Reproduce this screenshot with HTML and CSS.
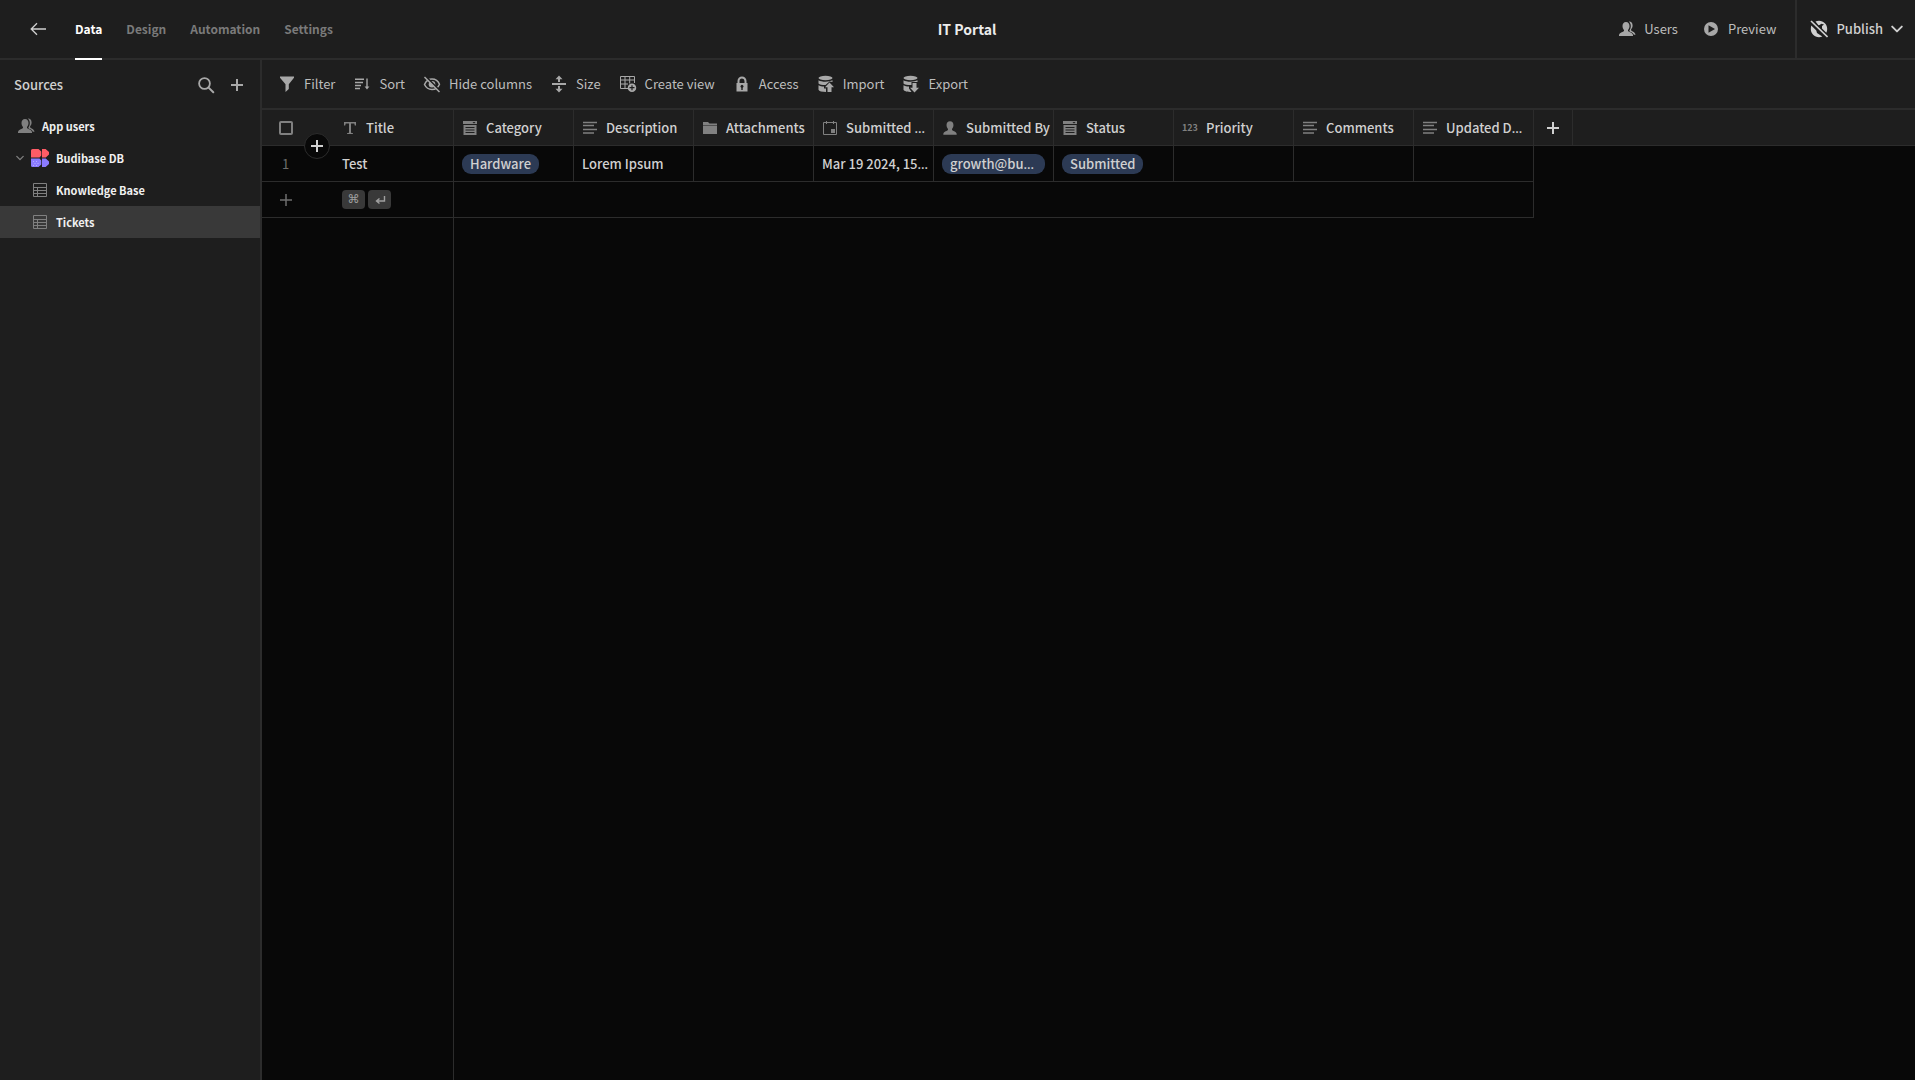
FILE: index.html
```html
<!DOCTYPE html>
<html lang="en">
<head>
<meta charset="utf-8">
<meta name="viewport" content="width=device-width, initial-scale=1">
<title>IT Portal</title>
<link rel="stylesheet" href="styles.css">
</head>
<body>
<svg class="sprite" aria-hidden="true">
  <symbol id="back" viewBox="0 0 18 18"><path d="M17 9H2.500M8 3.200L2.200 9 8 14.800" fill="none" stroke="currentColor" stroke-width="1.300"/></symbol>
  <symbol id="users" viewBox="0 0 18 18"><path d="M8 2C5.700 2 4.500 3.800 4.500 5.900c0 1.800.700 3 1.500 4v1.200c-.2.800-4.300 1.300-5 3.900V16h14v-1c-.7-2.600-4.800-3.100-5-3.900V9.900c.8-1 1.500-2.200 1.500-4C11.500 3.800 10.300 2 8 2z"/><path d="M10.700 1.600c2.400-.2 3.900 1.600 3.900 3.800 0 1.700-.7 2.900-1.500 3.800v1.100c.2.900 3.700 1.500 4.300 4v.5h-1.500c-.9-2.400-4.100-2.900-4.500-3.500v-.8c.8-1.200 1.400-2.400 1.400-4.400 0-2-.8-3.500-2.100-4.500z"/></symbol>
  <symbol id="user" viewBox="0 0 18 18"><path d="M9 1.500c-2.500 0-3.900 1.800-3.900 4.200 0 1.900.7 3.300 1.600 4.300v1.300C6.500 12.200 2 12.700 1.500 15.500v1h15v-1C16 12.700 11.500 12.200 11.300 11.300V10c.9-1 1.600-2.400 1.600-4.300 0-2.400-1.400-4.200-3.900-4.200z"/></symbol>
  <symbol id="play" viewBox="0 0 18 18"><path fill-rule="evenodd" d="M9 2a7 7 0 100 14A7 7 0 009 2zM6.500 5.200v7.600L13 9z"/></symbol>
  <symbol id="globe-off" viewBox="0 0 18 18"><path d="M5.500 1.500C6.500 1 7.700.8 9 .8c4.600 0 8.200 3.600 8.200 8.200 0 1.400-.3 2.700-.9 3.800L12 8.500V6l2-1.500-2.500-.8-2 1.300-1 .2zM1.300 5.500l5 5 .7 2.500 5.300 3.600c-1 .4-2.100.6-3.300.6C4.400 17.200.8 13.600.8 9c0-1.300.2-2.500.5-3.500z"/><path d="M1 1.500l16 15.500" stroke="#1e1e1e" stroke-width="3.400"/><path d="M1 1l16.500 16" stroke="currentColor" stroke-width="1.600"/></symbol>
  <symbol id="chevron" viewBox="0 0 10 10"><path d="M1 3l4 4 4-4" fill="none" stroke="currentColor" stroke-width="1.600" stroke-linecap="round" stroke-linejoin="round"/></symbol>
  <symbol id="search" viewBox="0 0 18 18"><path d="M11.600 11.600L16.300 16.300" stroke="currentColor" stroke-width="2" stroke-linecap="round"/><circle cx="7.500" cy="7.500" r="5.400" fill="none" stroke="currentColor" stroke-width="1.800"/></symbol>
  <symbol id="plus" viewBox="0 0 12 12"><path d="M6 0v12M0 6h12" stroke="currentColor" stroke-width="2"/></symbol>
  <symbol id="plus-thin" viewBox="0 0 12 12"><path d="M6 0v12M0 6h12" stroke="currentColor" stroke-width="1.500"/></symbol>
  <symbol id="table" viewBox="0 0 14 14"><path d="M.5.500h13v13H.5zM.5 4.500h13M.5 7.500h13M.5 10.500h13M4.500 4.500v9" fill="none" stroke="currentColor"/></symbol>
  <symbol id="brand" viewBox="0 0 18 18"><path fill="#ff5c66" d="M0 1.500Q0 0 1.500 0H7.500L10.300 2.500v4L8.500 8.500H0zM11 0h3.600L18 3v2.500L14.800 8.500H11z"/><path fill="#8b7bff" d="M0 9.500h8.500l1.800 2v4L7.500 18h-6Q0 18 0 16.500zM11 9.500h3.800L18 12.500V15l-3.400 3H11z"/><path fill="#b6adff" d="M2 12h1v1H2zM5 12h1v1H5zM3.500 14h1v1h-1zM6.500 14h1v1h-1zM2 16h1v1H2zM5 16h1v1H5z"/></symbol>
  <symbol id="filter" viewBox="0 0 18 18"><path d="M2 1.500h14v1.200l-5.200 6.500V14l-3.300 3V9.200L2 2.700z"/></symbol>
  <symbol id="sort" viewBox="0 0 18 18"><path d="M2 4.200h9M2 7.500h8M2 10.500h6M2 13.500h5" stroke="currentColor" stroke-width="1.600"/><path d="M14 3.500v9" stroke="currentColor" stroke-width="1.400"/><path d="M11.600 11.500h4.800L14 14.500z"/></symbol>
  <symbol id="hide" viewBox="0 0 18 18"><path d="M1.500 9.500C3 6.200 5.700 4 9 4s6.300 2.200 7.500 5.200c-1.300 3.200-4.100 5.300-7.500 5.300S3 12.700 1.500 9.500z" fill="none" stroke="currentColor" stroke-width="1.500"/><circle cx="9" cy="9.300" r="3.300"/><path d="M2.700 1.500L17 15.800" stroke="#1e1e1e" stroke-width="1.800"/><path d="M1.500 2L16.500 17" stroke="currentColor" stroke-width="1.500"/></symbol>
  <symbol id="size" viewBox="0 0 18 18"><path d="M2 8h14v2H2zM9 .500l3.500 3.700H10V7H8V4.200H5.500zM9 17.500l3.500-3.700H10V11H8v2.800H5.500z"/></symbol>
  <symbol id="view" viewBox="0 0 18 18"><path d="M9 13.500H1.500v-12h14V8M1.500 5h14M1.500 9H9M6 1.500v12M10.700 1.500v7" fill="none" stroke="currentColor"/><path fill-rule="evenodd" d="M13 8.500a4.200 4.200 0 100 8.500 4.200 4.200 0 000-8.500zM12.400 10.200h1.200v1.900h1.900v1.200h-1.900v1.900h-1.200v-1.900h-1.900v-1.200h1.900z"/></symbol>
  <symbol id="lock" viewBox="0 0 18 18"><path fill-rule="evenodd" d="M3.500 8h1V6a4.500 4.500 0 019 0v2h1v8.500h-11zM6.500 8h5V6a2.500 2.500 0 00-5 0zM8.300 12.800V15h1.400v-2.200a1.500 1.500 0 10-1.400 0z"/></symbol>
  <symbol id="import" viewBox="0 0 18 18"><ellipse cx="8.500" cy="3" rx="7" ry="2.200"/><path d="M1.500 5.200c3 1.900 10.500 2 14 .1V7L12.500 6.500 8.500 10C5 10 2.500 9.500 1.500 8.500zM1.500 10.200c1.200.9 3.500 1.300 5.500 1.400v2h2V17c-4-.1-7-.8-7.500-2.300zM12.500 7.500L17 12.300h-2.500V17h-4v-4.700H8z"/></symbol>
  <symbol id="export" viewBox="0 0 18 18"><ellipse cx="8.500" cy="3" rx="7" ry="2.200"/><path d="M1.500 5.200c3 1.900 10.500 2 14 .1V7H9.500v3C5 10 2.500 9.500 1.500 8.500zM1.500 10.200c1.200.9 3.500 1.300 5.500 1.400v2L9.500 17c-4-.1-7.500-.8-8-2.300zM12.500 17.500L8 12.700h2.500V8h4v4.700H17z"/></symbol>
  <symbol id="text" viewBox="0 0 16 16"><path d="M2 2h12v3.500h-1.200L12.300 3.500H9v9.300l2 .4V14H5v-.8l2-.4V3.500H3.700L3.200 5.500H2z"/></symbol>
  <symbol id="options" viewBox="0 0 16 16"><path fill-rule="evenodd" d="M1 1h14v3H1zM10.500 2h3L12 3.500zM1.500 5h13v10h-13zM3.500 7v1h9V7zM3.500 9.500v1h9v-1zM3.500 12v1h9v-1z"/></symbol>
  <symbol id="lines" viewBox="0 0 16 16"><path d="M1 2.500h14M1 5.500h11M1 9.500h14M1 13h11" stroke="currentColor" stroke-width="1.400"/></symbol>
  <symbol id="folder" viewBox="0 0 16 16"><path d="M1 2h5l1.500 1.500H15V5H1zM1 5.500h14V14H1z"/></symbol>
  <symbol id="calendar" viewBox="0 0 16 16"><path d="M1.500 2.500h13v12h-13zM4.500 1v3M11.500 1v3" fill="none" stroke="currentColor"/><path d="M9 9h4v4H9z"/></symbol>
  <symbol id="return" viewBox="0 0 12 12"><path d="M10.500 2v5H3M5.500 4.500L2.500 7l3 2.500" fill="none" stroke="currentColor" stroke-width="1.400"/></symbol>
</svg>

<header class="topbar">
  <nav class="tabs">
    <a class="back" href="#" aria-label="Back"><svg class="icon"><use href="#back"/></svg></a>
    <a class="tab tab-active" href="#">Data</a>
    <a class="tab" href="#">Design</a>
    <a class="tab" href="#">Automation</a>
    <a class="tab" href="#">Settings</a>
  </nav>
  <h1 class="app-name">IT Portal</h1>
  <div class="actions">
    <button class="tool"><svg class="icon"><use href="#users"/></svg>Users</button>
    <button class="tool"><svg class="icon"><use href="#play"/></svg>Preview</button>
    <button class="publish"><svg class="icon"><use href="#globe-off"/></svg>Publish<svg class="icon-chevron"><use href="#chevron"/></svg></button>
  </div>
</header>

<div class="workspace">
  <aside class="sidebar">
    <div class="sidebar-head">
      <h2 class="sidebar-title">Sources</h2>
      <button class="icon-button" aria-label="Search"><svg class="icon"><use href="#search"/></svg></button>
      <button class="icon-button" aria-label="Add source"><svg class="icon-plus"><use href="#plus"/></svg></button>
    </div>
    <nav class="sources">
      <a class="source" href="#"><svg class="icon"><use href="#users"/></svg>App users</a>
      <a class="source source-db" href="#"><svg class="icon-chevron"><use href="#chevron"/></svg><svg class="icon"><use href="#brand"/></svg>Budibase DB</a>
      <a class="source source-table" href="#"><svg class="icon-table"><use href="#table"/></svg>Knowledge Base</a>
      <a class="source source-table source-selected" href="#"><svg class="icon-table"><use href="#table"/></svg>Tickets</a>
    </nav>
  </aside>

  <main class="content">
    <div class="toolbar">
      <button class="tool"><svg class="icon"><use href="#filter"/></svg>Filter</button>
      <button class="tool"><svg class="icon"><use href="#sort"/></svg>Sort</button>
      <button class="tool"><svg class="icon"><use href="#hide"/></svg>Hide columns</button>
      <button class="tool"><svg class="icon"><use href="#size"/></svg>Size</button>
      <button class="tool"><svg class="icon"><use href="#view"/></svg>Create view</button>
      <button class="tool"><svg class="icon"><use href="#lock"/></svg>Access</button>
      <button class="tool"><svg class="icon"><use href="#import"/></svg>Import</button>
      <button class="tool"><svg class="icon"><use href="#export"/></svg>Export</button>
    </div>

    <div class="grid">
      <table class="rows">
        <colgroup>
          <col class="col-gutter"><col class="col-data"><col class="col-data"><col class="col-data"><col class="col-data"><col class="col-data"><col class="col-data"><col class="col-data"><col class="col-data"><col class="col-data"><col class="col-data"><col class="col-add"><col>
        </colgroup>
        <thead>
          <tr>
            <th class="gutter"><input class="check" type="checkbox" aria-label="Select all rows"></th>
            <th class="line"><div class="head"><svg class="icon-type"><use href="#text"/></svg>Title</div></th>
            <th class="line"><div class="head"><svg class="icon-type"><use href="#options"/></svg>Category</div></th>
            <th class="line"><div class="head"><svg class="icon-type"><use href="#lines"/></svg>Description</div></th>
            <th class="line"><div class="head"><svg class="icon-type"><use href="#folder"/></svg>Attachments</div></th>
            <th class="line"><div class="head"><svg class="icon-type"><use href="#calendar"/></svg><span>Submitted <span class="more">…</span></span></div></th>
            <th class="line"><div class="head"><svg class="icon-type"><use href="#user"/></svg>Submitted By</div></th>
            <th class="line"><div class="head"><svg class="icon-type"><use href="#options"/></svg>Status</div></th>
            <th class="line"><div class="head"><span class="number-type">123</span>Priority</div></th>
            <th class="line"><div class="head"><svg class="icon-type"><use href="#lines"/></svg>Comments</div></th>
            <th class="line"><div class="head"><svg class="icon-type"><use href="#lines"/></svg><span>Updated D<span class="more">…</span></span></div></th>
            <th class="line add-cell"><button class="add-column" aria-label="Add column"><svg class="icon-plus"><use href="#plus"/></svg></button></th>
            <th></th>
          </tr>
        </thead>
        <tbody>
          <tr>
            <td class="gutter row-number">1</td>
            <td class="line">Test</td>
            <td class="line"><span class="pill">Hardware</span></td>
            <td class="line">Lorem Ipsum</td>
            <td class="line"></td>
            <td class="line">Mar 19 2024, 15<span class="more">…</span></td>
            <td class="line"><span class="pill pill-full">growth@bu<span class="more">…</span></span></td>
            <td class="line"><span class="pill">Submitted</span></td>
            <td class="line"></td>
            <td class="line"></td>
            <td class="line"></td>
            <td class="empty" colspan="2"></td>
          </tr>
          <tr>
            <td class="gutter"><button class="add-row" aria-label="Add row"><svg class="icon-plus"><use href="#plus-thin"/></svg></button></td>
            <td class="line"><div class="keys"><kbd class="key">⌘</kbd><kbd class="key"><svg class="icon-plus"><use href="#return"/></svg></kbd></div></td>
            <td class="line" colspan="9"></td>
            <td class="empty" colspan="2"></td>
          </tr>
        </tbody>
      </table>
      <div class="frozen-edge"></div>
      <button class="insert" aria-label="Insert row"><svg class="icon-plus"><use href="#plus"/></svg></button>
    </div>
  </main>
</div>
</body>
</html>
```
FILE: styles.css
```css
* { box-sizing: border-box; }

:root {
  --panel: #1e1e1e;
  --canvas: #080808;
  --edge: #2c2c2c;
  --text: #d0d0d0;
  --muted: #6e6e6e;
}

body {
  margin: 0;
  min-height: 100vh;
  display: flex;
  flex-direction: column;
  background: var(--canvas);
  color: var(--text);
  font: 13px/20px "Noto Sans CJK KR", "Noto Sans", sans-serif;
}

a { color: inherit; text-decoration: none; }

button {
  display: flex;
  align-items: center;
  padding: 0;
  border: 0;
  background: none;
  color: inherit;
  font: inherit;
  white-space: nowrap;
}

svg { display: block; flex: none; fill: currentColor; }
.sprite { position: absolute; width: 0; height: 0; }
.icon { width: 18px; height: 18px; }
.icon-type { width: 16px; height: 16px; }
.icon-table { width: 14px; height: 14px; }
.icon-plus { width: 12px; height: 12px; }
.icon-chevron { width: 12px; height: 12px; }

/* Top bar */
.topbar {
  display: flex;
  justify-content: space-between;
  height: 60px;
  background: var(--panel);
  border-bottom: 2px solid var(--edge);
}
.tabs { display: flex; gap: 24px; padding-left: 29px; }
.back { display: flex; align-items: center; margin-right: 4px; }
.tab {
  display: flex;
  align-items: center;
  height: 60px;
  border-bottom: 2px solid transparent;
  color: #7a7a7a;
  font-size: 12px;
  font-weight: 700;
}
.tab-active { color: #fff; border-color: #fff; }
.app-name { margin: 0; align-self: center; color: #ececec; font-size: 14px; font-weight: 700; }
.actions { display: flex; gap: 6px; padding-left: 8px; }
.tool { gap: 8px; padding: 0 9px; color: #bdbdbd; }
.tool .icon { color: #a8a8a8; }
.publish {
  gap: 8px;
  margin-left: 4px;
  padding: 0 12px 0 13px;
  border-left: 2px solid var(--edge);
  font-weight: 500;
}

/* Sidebar */
.workspace { flex: 1; display: flex; }
.sidebar {
  width: 262px;
  flex: none;
  background: var(--panel);
  border-right: 2px solid var(--edge);
}
.sidebar-head { display: flex; align-items: center; gap: 16px; height: 50px; padding: 0 17px 0 14px; }
.sidebar-title { flex: 1; margin: 0; font-size: 13px; font-weight: 500; }
.icon-button { color: #a8a8a8; }
.source {
  display: flex;
  align-items: center;
  gap: 7px;
  height: 32px;
  padding-left: 17px;
  color: #f0f0f0;
  font-size: 11px;
  font-weight: 700;
}
.source .icon, .icon-table, .source .icon-chevron { color: #808080; }
.source-db { padding-left: 16px; }
.source-db .icon-chevron { width: 8px; height: 8px; }
.source-table { gap: 9px; padding-left: 33px; }
.source-selected { background: #393939; }

/* Grid */
.content { flex: 1; min-width: 0; display: flex; flex-direction: column; }
.toolbar {
  display: flex;
  height: 50px;
  padding-left: 7px;
  background: var(--panel);
  border-bottom: 2px solid var(--edge);
}
.grid { position: relative; flex: 1; display: flex; flex-direction: column; }
.rows { width: 100%; table-layout: fixed; border-collapse: separate; border-spacing: 0; }
.col-gutter { width: 72px; }
.col-data { width: 120px; }
.col-add { width: 39px; }
.rows th, .rows td {
  height: 36px;
  padding: 0 8px;
  border-bottom: 1px solid var(--edge);
  text-align: left;
  font-weight: 500;
  white-space: nowrap;
}
.rows th { padding-right: 2px; background: var(--panel); }
.rows .line { border-right: 1px solid var(--edge); }
.rows .empty { border: 0; }
.rows .gutter { padding-left: 18px; }
.rows .add-cell { padding: 0 13px; }
.rows .row-number { padding-left: 20px; color: var(--muted); font-weight: 400; }
.head { display: flex; align-items: center; gap: 8px; }
.icon-type { color: #808080; }
.more { font-family: "Noto Sans", sans-serif; line-height: 1; }
.number-type { width: 16px; color: #808080; font-size: 9px; font-weight: 700; }
.pill {
  display: block;
  width: fit-content;
  padding: 0 8px;
  border-radius: 9px;
  background: #2c3a54;
}
.pill-full { width: 100%; }
.check {
  display: block;
  appearance: none;
  width: 14px;
  height: 14px;
  margin: 0 0 0 -1px;
  border: 2px solid #808080;
  border-radius: 2px;
}
.add-row { color: var(--muted); }
.keys { display: flex; gap: 3px; }
.key {
  display: flex;
  align-items: center;
  justify-content: center;
  width: 23px;
  height: 19px;
  border-radius: 4px;
  background: #393939;
  color: #a0a0a0;
  font: 12px/19px "DejaVu Sans", sans-serif;
}
.frozen-edge { flex: 1; width: 192px; border-right: 1px solid var(--edge); }
.insert {
  position: absolute;
  top: 23px;
  left: 42px;
  width: 26px;
  height: 26px;
  justify-content: center;
  border: 1px solid var(--edge);
  border-radius: 50%;
  background: var(--canvas);
}
```
